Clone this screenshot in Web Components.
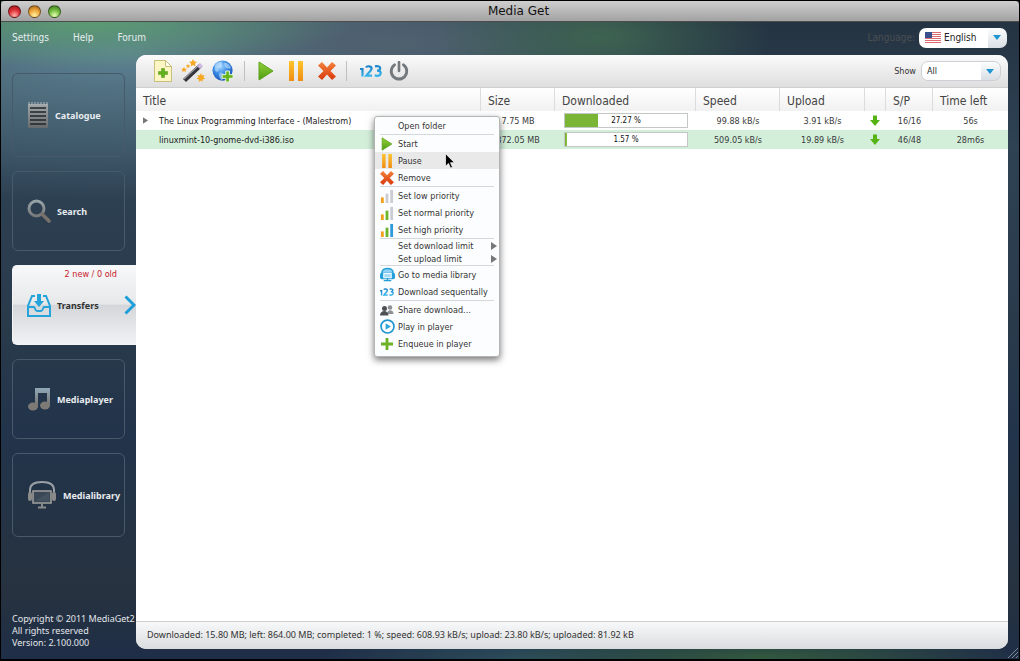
<!DOCTYPE html>
<html lang="en">
<head>
<meta charset="utf-8">
<title>Media Get</title>
<style>
html, body { margin: 0; height: 100%; }
body { background: #000; font-family: "DejaVu Sans Condensed", "Noto Sans", sans-serif; font-size: 9px; color: #333; }
</style>
</head>
<body>
<mg-window caption="Media Get">
  <mg-menubar slot="menubar"></mg-menubar>
  <mg-sidebar slot="sidebar">
    <mg-nav-item icon="notebook" tall>Catalogue</mg-nav-item>
    <mg-nav-item icon="search">Search</mg-nav-item>
    <mg-nav-item icon="inbox" active note="2 new / 0 old">Transfers</mg-nav-item>
    <mg-nav-item icon="music">Mediaplayer</mg-nav-item>
    <mg-nav-item icon="library" tall>Medialibrary</mg-nav-item>
    <span slot="legal">Copyright © 2011 MediaGet2<br>All rights reserved<br>Version: 2.100.000</span>
  </mg-sidebar>
  <mg-panel>
    <mg-toolbar slot="toolbar"></mg-toolbar>
    <mg-transfers></mg-transfers>
    <span slot="status">Downloaded: 15.80 MB; left: 864.00 MB; completed: 1 %; speed: 608.93 kB/s; upload: 23.80 kB/s; uploaded: 81.92 kB</span>
  </mg-panel>
  <mg-context-menu slot="overlay"></mg-context-menu>
</mg-window>

<script>
const bars = (a, b, c) => `<path d="M1 9h3v6H1z" fill="${a}"/><path d="M6 5h3v10H6z" fill="${b}"/><path d="M11 1h3v14h-3z" fill="${c}"/>`;
const ORANGE = '#f2a01c', GREEN = '#6fb52c', BLUE = '#2d9bdb', GREY = '#c9cdd2';

const ICONS = {
  notebook: ['0 0 22 28', `<defs><linearGradient id="g" x2="0" y2="1"><stop stop-color="#a3a8a9"/><stop offset="1" stop-color="#666a6c"/></linearGradient></defs>
    <path d="M1 3h20v24H1z" fill="url(#g)"/><path d="M2 1v3M5 1v3M8 1v3M11 1v3M14 1v3M17 1v3M20 1v3" stroke="#b4b9bb"/>
    <path d="M3 7h16M3 11h16M3 15h16M3 19h16M3 23h16" stroke="#20262c" stroke-width="1.4"/>`],
  search: ['0 0 24 24', `<defs><linearGradient id="g" x2="0" y2="1"><stop stop-color="#98a3a8"/><stop offset="1" stop-color="#77797a"/></linearGradient></defs>
    <circle cx="9.500" cy="9.500" r="7.500" fill="none" stroke="url(#g)" stroke-width="3"/><path d="M15 15l7 7" stroke="#77716c" stroke-width="3.600" stroke-linecap="round"/>`],
  inbox: ['0 0 24 24', `<g fill="none" stroke="#25a4dc" stroke-width="2"><path d="M8 3H5L1 13v10h22V13L19 3h-3"/><path d="M1 14h6c1 0 1 4 3 4h4c2 0 2-4 3-4h6"/></g>
    <path d="M10 1h4v7H17l-5 6-5-6h3z" fill="#25a4dc"/>`],
  music: ['0 0 24 24', `<defs><linearGradient id="g" x2="0" y2="1"><stop stop-color="#8fa9b8"/><stop offset="1" stop-color="#77706a"/></linearGradient></defs>
    <path d="M8 1h15v18h-3V6h-9v14H8z" fill="url(#g)"/><ellipse cx="6" cy="19.500" rx="5" ry="4" fill="#7d7a76"/><ellipse cx="18" cy="18.500" rx="5" ry="4" fill="#7d7a76"/>`],
  library: ['0 0 30 30', `<path d="M3 14V10C3 4 8 2 15 2s12 2 12 8v4" fill="none" stroke="#99a0a5" stroke-width="2"/>
    <rect x="1" y="12" width="4" height="9" rx="2" fill="#8a8a88"/><rect x="25" y="12" width="4" height="9" rx="2" fill="#8a8a88"/>
    <rect x="6" y="11" width="18" height="12" fill="#3a4756" stroke="#9b9b98" stroke-width="1.600"/><path d="M8 21l14-9v9z" fill="#44515f"/>
    <path d="M15 23v4M11 27.500h8" stroke="#88898a" stroke-width="2"/>`],
  doc: ['0 0 22 22', `<path d="M2.500.500h11l6 6v15h-17z" fill="#fbf6c3" stroke="#c9bf7d"/><path d="M13.500.500v6h6z" fill="#fffdf0" stroke="#c9bf7d"/>
    <path d="M9.500 8.500h3v3h3v3h-3v3h-3v-3h-3v-3h3z" fill="#64b01c" stroke="#4b9210" stroke-width=".500"/>`],
  wand: ['0 0 24 24', `<path d="M2 20L18 5l3 3L5 23z" fill="#35343a"/><path d="M3 20L17 7" stroke="#9a98a2" stroke-width="1.200"/><path d="M16 7l3-3 3 3-3 3z" fill="#cbb9e4"/>
    <g fill="#f7a823"><path d="M12 0l1.200 2.600 2.800.2-2.100 1.900.6 2.700L12 6 9.500 7.400l.6-2.700L8 2.800l2.800-.2z"/><path d="M3 8l1 1.700 2 .1-1.500 1.300.5 1.900L3 12l-2 1 .5-1.900L0 9.800l2-.1z"/><path d="M7 5l.7 1.300 1.500.2-1.100 1 .2 1.500L7 8.300 5.700 9l.2-1.500-1.100-1 1.500-.2z"/>
    <path d="M20 14l1 2.400 2.500-.7-1 2.400 1.500 1.900-2.500.4.200 2.600L20 21.500 17.900 23l.1-2.600-2.500-.4 1.900-1.900-1.300-2.400 2.700.7z"/></g>`],
  globe: ['0 0 24 24', `<defs><radialGradient id="g" cx=".4" cy=".3" r=".7"><stop stop-color="#a9d8ff"/><stop offset=".5" stop-color="#3d8fe8"/><stop offset="1" stop-color="#1a55b8"/></radialGradient></defs>
    <circle cx="11.500" cy="11.500" r="11" fill="url(#g)"/><path d="M3 6c3-4 6-4 8-4-1 3 1 3-1 5s-3 1-3 4-3 2-4 0zM13 3c4 0 6 2 8 6-3 1-6 0-7-2zM8 14c3-1 6 1 5 4s-2 4-3 4c-2-2-3-5-2-8z" fill="#d5eeff" opacity=".5"/>
    <path d="M15 12h4v4h4v4h-4v4h-4v-4h-4v-4h4z" fill="#67b51d" stroke="#f2fbe8"/>`],
  play: ['0 0 16 20', `<defs><linearGradient id="g" x2="0" y2="1"><stop stop-color="#93d03a"/><stop offset="1" stop-color="#4d9c10"/></linearGradient></defs><path d="M1 1l14 9L1 19z" fill="url(#g)" stroke="#5ba21c"/>`],
  pause: ['0 0 16 20', `<defs><linearGradient id="g" x2="0" y2="1"><stop stop-color="#ffc52b"/><stop offset="1" stop-color="#f08c12"/></linearGradient></defs><path d="M1 0h5v20H1zM10 0h5v20h-5z" fill="url(#g)"/>`],
  remove: ['0 0 18 18', `<defs><linearGradient id="g" x2="0" y2="1"><stop stop-color="#f4813c"/><stop offset="1" stop-color="#d8390c"/></linearGradient></defs><path d="M4 0l5 5.500L14 0l4 3.500L12.500 9l5.500 5.500-4 3.500-5-5.500L4 18l-4-3.500L5.500 9 0 3.500z" fill="url(#g)"/>`],
  seq: ['0 0 22 12', `<defs><linearGradient id="g" x2="0" y2="1"><stop stop-color="#1f86cc"/><stop offset="1" stop-color="#36b4ec"/></linearGradient></defs>
    <g fill="none" stroke="url(#g)" stroke-width="2.200"><path d="M0 4h2.500v7.500"/><path d="M6 2.500c1-2 6-1.500 5.500 1.500-.3 2-3.500 4-5.300 6.600H12"/><path d="M15 1.400c3-.6 5.500 0 5.200 2-.2 1.700-2 2.200-3.200 2.200 2 0 4 .8 3.700 2.800-.3 2.500-3.500 2.800-6 2"/></g>`],
  power: ['0 0 18 18', `<path d="M5 3.500a7 7 0 1 0 8 0" fill="none" stroke="#74797e" stroke-width="2.600" stroke-linecap="round"/><path d="M9 1v8" stroke="#74797e" stroke-width="2.400" stroke-linecap="round"/>`],
  low: ['0 0 15 15', bars(ORANGE, GREY, GREY)],
  normal: ['0 0 15 15', bars(ORANGE, GREEN, GREY)],
  high: ['0 0 15 15', bars(ORANGE, GREEN, BLUE)],
  tv: ['0 0 16 16', `<path d="M2 9V6c0-6 12-6 12 0v3" fill="#8fd2f2" stroke="#239fd9" stroke-width="1.600"/><rect x="0" y="6" width="16" height="7" rx="2" fill="#239fd9"/><rect x="4" y="7" width="8" height="4.500" fill="#a8ddf6" stroke="#fff"/><path d="M8 12v2M4 14.500h8" stroke="#239fd9" stroke-width="1.500"/>`],
  people: ['0 0 14 12', `<g fill="#8d9095"><circle cx="10" cy="3.500" r="2.300"/><path d="M7 10c0-5 6.500-5 6.500 0z"/></g><g fill="#4d5055"><circle cx="4.500" cy="4.500" r="2.500"/><path d="M0 11.500c0-6 8.500-6 8.500 0z"/></g>`],
  player: ['0 0 16 16', `<circle cx="8" cy="8" r="6.900" fill="#fff" stroke="#2195cf" stroke-width="1.800"/><path d="M6 4.500L11.500 8 6 11.500z" fill="#2ba3dd"/>`],
  plus: ['0 0 12 12', `<path d="M4.600 0h2.800v4.600H12v2.800H7.400V12H4.600V7.400H0V4.600h4.600z" fill="#6bb324"/>`],
  down: ['0 0 10 12', `<path d="M3 .500h4V5h3l-5 6L0 5h3z" fill="#55b414"/>`],
  chevron: ['0 0 12 20', `<path d="M1.500 1.500L10 10l-8.500 8.500" fill="none" stroke="#1d9fdc" stroke-width="3"/>`],
  caret: ['0 0 8 5', `<path d="M0 0h8L4 5z" fill="#1f94d2"/>`],
  tri: ['0 0 6 8', `<path d="M0 0l6 4-6 4z" fill="#777"/>`],
  flag: ['0 0 16 11', `<path d="M0 0h16v11H0z" fill="#fff"/><path d="M0 .500h16M0 2.500h16M0 4.500h16M0 6.500h16M0 8.500h16M0 10.500h16" stroke="#dd6a70"/><path d="M0 0h7v6H0z" fill="#3b4f8c"/>`],
  grip: ['0 0 10 10', `<path d="M0 10L10 0M4 10l6-6M8 10l2-2" stroke="#7d8790"/>`],
  cursor: ['0 0 10 16', `<path d="M.500.700v12.500l3-2.800 2 4.700 2-.9-2-4.500h4z" fill="#000" stroke="#fff" stroke-width=".700"/>`]
};

const define = (name, template) => customElements.define(name, class extends HTMLElement {
  constructor() {
    super();
    this.attachShadow({ mode: 'open' });
  }
  connectedCallback() {
    this.shadowRoot.innerHTML = typeof template === 'function' ? template(this) : template;
  }
});

define('mg-icon', el => {
  const [box, art] = ICONS[el.getAttribute('name')];
  const [, , w, h] = box.split(' ');
  return `<style>:host{display:block;flex:none}svg{display:block}</style>
    <svg viewBox="${box}" width="${el.getAttribute('w') || w}" height="${el.getAttribute('h') || h}" aria-hidden="true">${art}</svg>`;
});

define('mg-window', el => `
<style>
  :host { display: flex; flex-direction: column; box-sizing: border-box; height: 100vh; min-height: 640px; position: relative;
    border: 1px solid #000; border-bottom-width: 2px; overflow: hidden;
    background:
      radial-gradient(ellipse 260px 45px at 90px 22px, #5b9a72 0%, #5b9a7200 100%),
      radial-gradient(ellipse 170px 60px at 600px 36px, #3d6350 0%, #3d635000 100%),
      radial-gradient(ellipse 260px 60px at 390px 42px, #50606f 0%, #50606f00 100%),
      radial-gradient(ellipse 260px 30px at 760px 100%, #335a3e 0%, #335a3e00 100%),
      radial-gradient(ellipse 200px 34px at 520px 100%, #2c4c5a 0%, #2c4c5a00 100%),
      radial-gradient(ellipse 560px 150px at 120px 50px, #5f8494 0%, #5f849400 100%),
      linear-gradient(#23313f 0, #2e4254 22%, #293a4b 50%, #22344b 66%, #26323f 90%, #1f2e48 100%); }
  header { display: flex; flex: none; align-items: center; height: 20px; padding: 0 5px 0 7px; background: linear-gradient(#cfcfcf, #a2a2a2); border-bottom: 1px solid #4c4c4c; border-radius: 4px 4px 0 0; }
  .lights { display: flex; flex: none; gap: 7px; }
  .lights button { width: 13px; height: 13px; padding: 0; border: 1px solid #0007; border-radius: 50%; }
  .close { background: radial-gradient(circle at 50% 85%, #ffb0a8, #df3038 50%, #8d1218); }
  .min { background: radial-gradient(circle at 50% 85%, #fff3a0, #efa53a 50%, #96591a); }
  .max { background: radial-gradient(circle at 50% 85%, #e4ffb0, #73bb40 50%, #36701c); }
  h1 { flex: 1; margin: 0; font: 12px/20px "DejaVu Sans", sans-serif; color: #111; text-align: center; }
  .end { width: 38px; }
  .main { flex: 1; display: grid; grid-template-columns: 135px minmax(0, 1fr); min-height: 0; padding: 0 11px 10px 0; }
  mg-icon { position: absolute; right: 1px; bottom: 1px; }
</style>
<header><div class="lights"><button class="close" aria-label="Close"></button><button class="min" aria-label="Minimize"></button><button class="max" aria-label="Zoom"></button></div><h1>${el.getAttribute('caption')}</h1><div class="end"></div></header>
<slot name="menubar"></slot>
<div class="main"><slot name="sidebar"></slot><slot></slot></div>
<mg-icon name="grip"></mg-icon>
<slot name="overlay"></slot>`);

define('mg-select', el => `
<style>
  :host { display: grid; grid-template-columns: auto 1fr 20px; align-items: center; box-sizing: border-box; height: 20px;
    background: linear-gradient(#fff, #fff) left / calc(100% - 19px) 100% no-repeat, linear-gradient(#fcfdfe, #d9dfe5); border-radius: 7px; overflow: hidden; }
  .flag { grid-area: 1 / 1; margin-left: 6px; }
  .caret { grid-area: 1 / 3; justify-self: center; }
  select { grid-area: 1 / 1 / 2 / 4; height: 100%; width: 100%; margin: 0; border: 0; padding: 0 20px 0 var(--inset, 5px); appearance: none; background: none; font: inherit; color: #222; }
</style>
${el.hasAttribute('flag') ? '<mg-icon class="flag" name="flag"></mg-icon>' : ''}
<select aria-label="${el.getAttribute('label')}">${el.getAttribute('options').split(',').map(o => `<option>${o}</option>`).join('')}</select>
<mg-icon class="caret" name="caret"></mg-icon>`);

define('mg-menubar', `
<style>
  :host { display: flex; flex: none; align-items: center; height: 33px; padding: 0 12px 2px 11px; box-sizing: border-box; font-size: 10px; color: #e6edee; }
  nav { display: flex; gap: 24px; flex: 1; }
  a { color: inherit; text-decoration: none; }
  .lang { color: #4b4f52; margin-right: 4px; }
  mg-select { width: 88px; --inset: 25px; }
</style>
<nav><a href="#settings">Settings</a><a href="#help">Help</a><a href="#forum">Forum</a></nav>
<span class="lang">Language:</span><mg-select flag label="Language" options="English,Russian"></mg-select>`);

define('mg-sidebar', `
<style>
  :host { display: flex; flex-direction: column; min-height: 0; padding: 18px 0 0 11px; box-sizing: border-box; }
  nav { display: flex; flex-direction: column; gap: 14px; }
  footer { margin-top: auto; font-family: "Noto Sans", sans-serif; line-height: 12px; color: #e2e6ea; white-space: nowrap; }
</style>
<nav><slot></slot></nav><footer><slot name="legal"></slot></footer>`);

define('mg-nav-item', el => `
<style>
  :host { display: block; height: 80px; margin-right: 11px; font-family: "Noto Sans", sans-serif; font-weight: bold; }
  :host([tall]) { height: 84px; }
  button { display: flex; align-items: center; gap: 6px; width: 100%; height: 100%; padding: 0 0 0 14px; box-sizing: border-box; position: relative;
    border: 1px solid #48596a; border-radius: 6px; background: none; font: inherit; color: #e8ecef; text-align: left; }
  :host([active]) { margin-right: 0; }
  :host([active]) button { border-color: #f4f5f6; border-right: 0; border-radius: 5px 0 0 5px; color: #333;
    background: linear-gradient(#f7f8f9, #e6e8ea 49%, #d3d6da 50%, #f1f2f4); }
  .note { position: absolute; top: 3px; right: 19px; font: 9px "DejaVu Sans Condensed", sans-serif; color: #c8202a; }
  .chevron { margin-left: auto; }
</style>
<button><mg-icon name="${el.getAttribute('icon')}"></mg-icon><slot></slot>
${el.hasAttribute('active') ? `<span class="note">${el.getAttribute('note')}</span><mg-icon class="chevron" name="chevron"></mg-icon>` : ''}</button>`);

define('mg-panel', `
<style>
  :host { display: flex; flex-direction: column; min-width: 0; min-height: 0; background: #fff; border-radius: 10px; overflow: hidden; }
  .body { flex: 1; min-height: 0; }
  footer { height: 27px; padding: 0 11px; font-family: "Noto Sans", sans-serif; line-height: 25px; border-top: 1px solid #cfcfcf; background: linear-gradient(#f7f8f9, #d9dcde); white-space: nowrap; }
</style>
<slot name="toolbar"></slot><div class="body"><slot></slot></div><footer><slot name="status"></slot></footer>`);

define('mg-toolbar', `
<style>
  :host { display: flex; flex: none; align-items: center; height: 33px; padding: 0 7px 0 16px; box-sizing: border-box; background: linear-gradient(#fbfbfb, #dedede); border-bottom: 1px solid #cfcfcf; }
  button { display: flex; padding: 0; margin-right: 7px; border: 0; background: none; }
  .wide { margin-right: 14px; }
  hr { width: 1px; height: 20px; margin: 0 13px 0 3px; border: 0; background: #bfbfbf; }
  .show { margin-left: auto; margin-right: 5px; }
  mg-select { width: 80px; border: 1px solid #cdd1d5; }
</style>
<button aria-label="Add torrent"><mg-icon name="doc"></mg-icon></button>
<button aria-label="Create torrent"><mg-icon name="wand"></mg-icon></button>
<button aria-label="Add link"><mg-icon name="globe" w="22" h="22"></mg-icon></button>
<hr>
<button class="wide" aria-label="Start"><mg-icon name="play"></mg-icon></button>
<button class="wide" aria-label="Pause"><mg-icon name="pause"></mg-icon></button>
<button aria-label="Remove"><mg-icon name="remove"></mg-icon></button>
<hr>
<button aria-label="Sequential"><mg-icon name="seq"></mg-icon></button>
<button aria-label="Shut down"><mg-icon name="power" w="20" h="20"></mg-icon></button>
<span class="show">Show</span><mg-select label="Show" options="All,Active"></mg-select>`);

define('mg-progress', el => `
<style>
  :host { display: block; height: 15px; box-sizing: border-box; border: 1px solid #c4c8c4; font-size: 8px; line-height: 13px; color: #111; text-align: center;
    background: linear-gradient(#7ab535, #7ab535) left / ${el.getAttribute('value')}% 100% no-repeat #fff; }
</style>
<div role="progressbar" aria-valuenow="${el.getAttribute('value')}">${el.getAttribute('value')} %</div>`);

define('mg-transfers', `
<style>
  :host { display: block; }
  table { width: 100%; table-layout: fixed; border-collapse: separate; border-spacing: 0; color: #3a3a3a; }
  th { height: 23px; padding: 2px 7px 0; box-sizing: border-box; font-weight: normal; font-size: 12px; text-align: left; color: #444;
    background: linear-gradient(#fff, #f1f1f1); border-right: 1px solid #dcdcdc; }
  th:last-child { border: 0; }
  td { height: 18px; padding: 0; text-align: center; white-space: nowrap; }
  tbody tr { height: 19px; }
  .name { text-align: left; color: #222; }
  .name div { display: flex; align-items: center; padding-left: 7px; }
  .name span { width: 16px; }
  td.bar { padding: 0 8px 0 9px; }
  tr.on td { background: #d3efda; }
  .arrow mg-icon { margin-left: 5px; }
</style>
<table>
  <colgroup><col><col style="width:74px"><col style="width:141px"><col style="width:84px"><col style="width:85px"><col style="width:21px"><col style="width:47px"><col style="width:75px"></colgroup>
  <thead><tr><th>Title</th><th>Size</th><th>Downloaded</th><th>Speed</th><th>Upload</th><th></th><th>S/P</th><th>Time left</th></tr></thead>
  <tbody>
    <tr><td class="name"><div><span><mg-icon name="tri" w="5" h="7"></mg-icon></span>The Linux Programming Interface - (Malestrom)</div></td><td>7.75 MB</td><td class="bar"><mg-progress value="27.27"></mg-progress></td><td>99.88 kB/s</td><td>3.91 kB/s</td><td class="arrow"><mg-icon name="down"></mg-icon></td><td>16/16</td><td>56s</td></tr>
    <tr class="on"><td class="name"><div><span></span>linuxmint-10-gnome-dvd-i386.iso</div></td><td>872.05 MB</td><td class="bar"><mg-progress value="1.57"></mg-progress></td><td>509.05 kB/s</td><td>19.89 kB/s</td><td class="arrow"><mg-icon name="down"></mg-icon></td><td>46/48</td><td>28m6s</td></tr>
  </tbody>
</table>`);

define('mg-menu-item', el => `
<style>
  :host { display: block; height: 17px; }
  :host([compact]) { height: 13px; }
  button { display: grid; grid-template-columns: 14px 1fr auto; column-gap: 4px; align-items: center; width: 100%; height: 100%; padding: 0 1px 0 5px; border: 0; background: none; font: inherit; color: #333; text-align: left; white-space: nowrap; }
  mg-icon { justify-self: center; }
  .label { grid-column: 2; }
  :host([hover]) button { background: #e9e9e9; }
</style>
<button role="menuitem">${el.hasAttribute('icon') ? `<mg-icon name="${el.getAttribute('icon')}" w="${el.getAttribute('w') || 14}" h="${el.getAttribute('h') || 14}"></mg-icon>` : ''}<span class="label"><slot></slot></span>${el.hasAttribute('compact') ? '<mg-icon name="tri" w="8" h="8"></mg-icon>' : ''}</button>`);

define('mg-context-menu', `
<style>
  :host { position: absolute; left: 373px; top: 115px; width: 126px; box-sizing: border-box; padding: 0 0 4px; border: 1px solid #b4b4b4; border-radius: 3px; background: #fcfdfe; box-shadow: 0 3px 7px #0008; }
  hr { height: 1px; margin: 0 5px; border: 0; background: #d5d8db; }
  .cursor { position: absolute; left: 70px; top: 36px; }
</style>
<div role="menu">
<mg-menu-item>Open folder</mg-menu-item>
<hr>
<mg-menu-item icon="play" w="12">Start</mg-menu-item>
<mg-menu-item icon="pause" w="12" hover>Pause</mg-menu-item>
<mg-menu-item icon="remove">Remove</mg-menu-item>
<hr>
<mg-menu-item icon="low">Set low priority</mg-menu-item>
<mg-menu-item icon="normal">Set normal priority</mg-menu-item>
<mg-menu-item icon="high">Set high priority</mg-menu-item>
<hr>
<mg-menu-item compact>Set download limit</mg-menu-item>
<mg-menu-item compact>Set upload limit</mg-menu-item>
<hr>
<mg-menu-item icon="tv" w="15" h="15">Go to media library</mg-menu-item>
<mg-menu-item icon="seq">Download sequentally</mg-menu-item>
<hr>
<mg-menu-item icon="people">Share download...</mg-menu-item>
<mg-menu-item icon="player" w="15" h="15">Play in player</mg-menu-item>
<mg-menu-item icon="plus" w="12">Enqueue in player</mg-menu-item>
</div>
<mg-icon class="cursor" name="cursor"></mg-icon>`);
</script>
</body>
</html>
